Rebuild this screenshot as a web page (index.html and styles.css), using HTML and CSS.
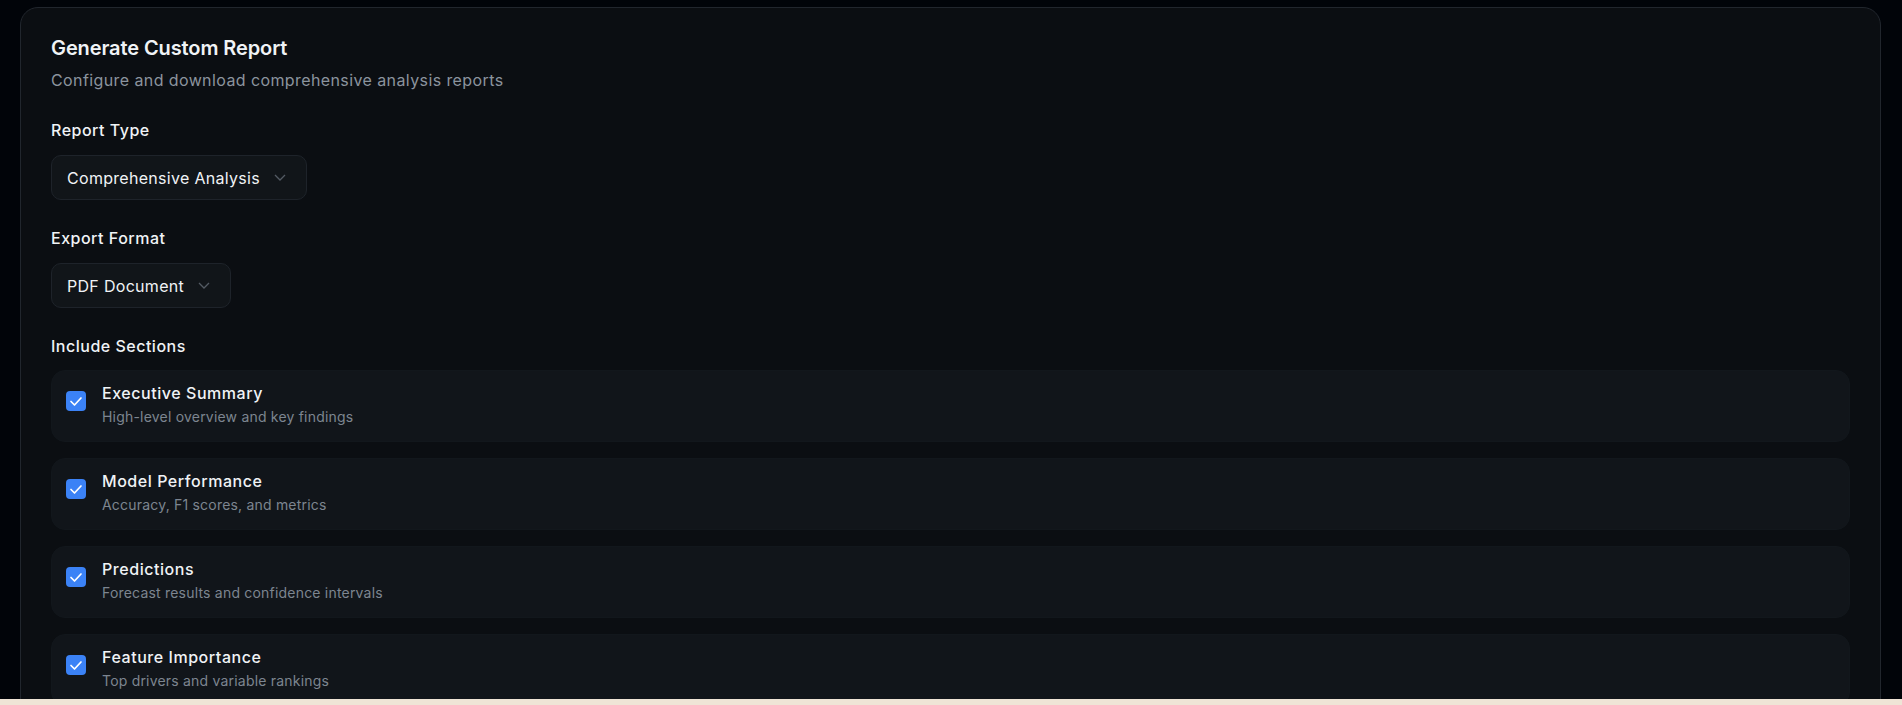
FILE: index.html
```html
<!DOCTYPE html>
<html lang="en">
<head>
  <meta charset="UTF-8">
  <title>Generate Custom Report</title>
  <link rel="stylesheet" href="styles.css">
</head>
<body>

  <div class="page">
    <div class="report-card">
      <h2 class="card-title">Generate Custom Report</h2>
      <p class="card-desc">Configure and download comprehensive analysis reports</p>

      <div class="field">
        <label class="field-label">Report Type</label>
        <button class="select-btn">
          <span>Comprehensive Analysis</span>
          <svg class="chevron" width="12" height="7" viewBox="0 0 12 7"><polyline points="1,1 6,6 11,1" /></svg>
        </button>
      </div>

      <div class="field">
        <label class="field-label">Export Format</label>
        <button class="select-btn">
          <span>PDF Document</span>
          <svg class="chevron" width="12" height="7" viewBox="0 0 12 7"><polyline points="1,1 6,6 11,1" /></svg>
        </button>
      </div>

      <div class="field">
        <label class="field-label sections-label">Include Sections</label>
        <div class="section-list">
          <div class="section-item">
            <span class="check"><svg width="20" height="20" viewBox="0 0 20 20"><polyline points="5,10.5 8.5,14 15,7" /></svg></span>
            <div>
              <div class="section-name">Executive Summary</div>
              <div class="section-info">High-level overview and key findings</div>
            </div>
          </div>
          <div class="section-item">
            <span class="check"><svg width="20" height="20" viewBox="0 0 20 20"><polyline points="5,10.5 8.5,14 15,7" /></svg></span>
            <div>
              <div class="section-name">Model Performance</div>
              <div class="section-info">Accuracy, F1 scores, and metrics</div>
            </div>
          </div>
          <div class="section-item">
            <span class="check"><svg width="20" height="20" viewBox="0 0 20 20"><polyline points="5,10.5 8.5,14 15,7" /></svg></span>
            <div>
              <div class="section-name">Predictions</div>
              <div class="section-info">Forecast results and confidence intervals</div>
            </div>
          </div>
          <div class="section-item">
            <span class="check"><svg width="20" height="20" viewBox="0 0 20 20"><polyline points="5,10.5 8.5,14 15,7" /></svg></span>
            <div>
              <div class="section-name">Feature Importance</div>
              <div class="section-info">Top drivers and variable rankings</div>
            </div>
          </div>
        </div>
      </div>
    </div>
  </div>

</body>
</html>
```
FILE: styles.css
```css
body {
  margin: 0;
  background: #efe4d6;
  font-family: Inter, "Noto Sans", sans-serif;
  color: #e6edf3;
}
.page {
  height: 699px;
  overflow: hidden;
  background: #010409;
  padding: 7px 21px 0 20px;
  box-sizing: border-box;
}
.report-card {
  background: #0b0e12;
  border: 1px solid #21262d;
  border-radius: 18px;
  padding: 26px 30px 40px 30px;
}
.card-title {
  margin: 0;
  font-size: 20px;
  line-height: 28px;
  font-weight: 600;
  letter-spacing: -0.1px;
  color: #f0f3f6;
}
.card-desc {
  margin: 6px 0 0 0;
  font-size: 16px;
  line-height: 24px;
  letter-spacing: 0.4px;
  color: #8b949e;
}
.field {
  margin-top: 26px;
}
.field-label {
  display: block;
  font-size: 16px;
  line-height: 24px;
  font-weight: 500;
  letter-spacing: 0.5px;
  color: #f0f3f6;
  margin-bottom: 13px;
}
.sections-label {
  margin-bottom: 12px;
}
.select-btn {
  display: inline-flex;
  align-items: center;
  gap: 14px;
  height: 45px;
  padding: 0 20px 0 15px;
  background: #111519;
  border: 1px solid #1e232a;
  border-radius: 10px;
  font-family: inherit;
  font-size: 16px;
  letter-spacing: 0.3px;
  color: #f0f3f6;
}
.chevron {
  fill: none;
  stroke: #535a63;
  stroke-width: 1.3;
}
.section-list {
  display: flex;
  flex-direction: column;
  gap: 16px;
}
.section-item {
  display: flex;
  align-items: flex-start;
  gap: 16px;
  height: 72px;
  box-sizing: border-box;
  padding: 12px 15px 14px 14px;
  background: #11151a;
  border: 1px solid #12171c;
  border-radius: 14px;
}
.check {
  width: 20px;
  height: 20px;
  margin-top: 8px;
  border-radius: 4px;
  background: #3b82f6;
  flex-shrink: 0;
}
.check svg {
  display: block;
  fill: none;
  stroke: #fff;
  stroke-width: 1.7;
  stroke-linecap: round;
  stroke-linejoin: round;
}
.section-name {
  font-size: 16px;
  line-height: 20px;
  font-weight: 500;
  letter-spacing: 0.55px;
  color: #f0f3f6;
}
.section-info {
  margin-top: 4px;
  font-size: 14px;
  line-height: 20px;
  letter-spacing: 0.2px;
  color: #7d8590;
}
```
